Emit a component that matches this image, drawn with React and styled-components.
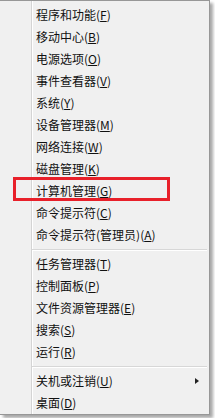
import React from 'react'
import styled, { createGlobalStyle } from 'styled-components'

const GlobalStyle = createGlobalStyle`
  html, body {
    margin: 0;
    padding: 0;
    background: #ffffff;
  }
  body {
    width: 215px;
    height: 418px;
    overflow: hidden;
    font-family: "Noto Sans CJK SC", "Noto Sans", sans-serif;
  }
`

const Menu = styled.div`
  position: relative;
  width: 210px;
  height: 415px;
  box-sizing: border-box;
  padding-top: 3px;
  background: #f0f0f0;
  border-top: 1px solid #979797;
  border-right: 1px solid #979797;
  border-bottom: 1px solid #979797;
  box-shadow: 3px 3px 3px rgba(0, 0, 0, 0.35);

  &:before {
    content: '';
    position: absolute;
    top: 0;
    bottom: 0;
    left: 31px;
    width: 1px;
    background: #d4d4d4;
    border-right: 1px solid #ffffff;
  }
`

const Item = styled.div`
  position: relative;
  display: flex;
  align-items: center;
  height: 22px;
  padding: 0 10px 0 36px;
  font-size: 12px;
  line-height: 22px;
  color: #111;
  white-space: nowrap;
`

const Label = styled.span`
  flex: 1;
  u {
    text-decoration: underline;
    text-underline-offset: 1px;
  }
`

const Arrow = styled.span`
  width: 0;
  height: 0;
  border-top: 3.5px solid transparent;
  border-bottom: 3.5px solid transparent;
  border-left: 4px solid #222;
`

const Separator = styled.div`
  position: relative;
  height: 7px;
  &:after {
    content: '';
    position: absolute;
    top: 3px;
    left: 32px;
    right: 2px;
    height: 1px;
    background: #d7d7d7;
    border-bottom: 1px solid #ffffff;
  }
`

const Highlight = styled.div`
  position: absolute;
  left: 13px;
  top: -3px;
  width: 157px;
  height: 24px;
  box-sizing: border-box;
  border: 3px solid #e8202a;
  pointer-events: none;
`

const groups = [
  [
    ['程序和功能', 'F'],
    ['移动中心', 'B'],
    ['电源选项', 'O'],
    ['事件查看器', 'V'],
    ['系统', 'Y'],
    ['设备管理器', 'M'],
    ['网络连接', 'W'],
    ['磁盘管理', 'K'],
    ['计算机管理', 'G', { marked: true }],
    ['命令提示符', 'C'],
    ['命令提示符(管理员)', 'A'],
  ],
  [
    ['任务管理器', 'T'],
    ['控制面板', 'P'],
    ['文件资源管理器', 'E'],
    ['搜索', 'S'],
    ['运行', 'R'],
  ],
  [
    ['关机或注销', 'U', { submenu: true }],
    ['桌面', 'D'],
  ],
]

const MenuItem = ({ text, hotkey, marked, submenu }) => (
  <Item>
    <Label>
      {text}(<u>{hotkey}</u>)
    </Label>
    {submenu && <Arrow />}
    {marked && <Highlight />}
  </Item>
)

export default function App() {
  return (
    <>
      <GlobalStyle />
      <Menu>
        {groups.map((group, gi) => (
          <React.Fragment key={gi}>
            {gi > 0 && <Separator />}
            {group.map(([text, hotkey, opts = {}]) => (
              <MenuItem key={text} text={text} hotkey={hotkey} {...opts} />
            ))}
          </React.Fragment>
        ))}
      </Menu>
    </>
  )
}
